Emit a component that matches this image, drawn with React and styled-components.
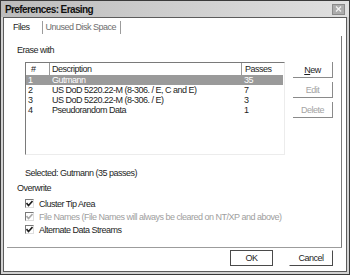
import styled, { createGlobalStyle } from "styled-components";

const GlobalStyle = createGlobalStyle`
  html, body {
    margin: 0;
    padding: 0;
    background: #ffffff;
  }
`;

const Window = styled.div`
  width: 350px;
  height: 275px;
  box-sizing: border-box;
  display: flex;
  flex-direction: column;
  background: #d2d2d2;
  border: 1px solid #3a3a3a;
  padding: 0 2px 2px 2px;
  font-family: "Liberation Sans", Arial, sans-serif;
  font-size: 9px;
  letter-spacing: -0.5px;
  color: #1e1e1e;
`;

const TitleBar = styled.div`
  height: 16px;
  margin: 0 -2px;
  padding: 0 4px 0 4px;
  display: flex;
  align-items: center;
  justify-content: space-between;
  background: linear-gradient(to right, #bcbcbc, #e0e0e0);
`;

const Title = styled.span`
  font-size: 10px;
  font-weight: bold;
  letter-spacing: -0.6px;
  color: #111;
`;

const CloseButton = styled.div`
  width: 13px;
  height: 11px;
  box-sizing: border-box;
  border: 1px solid #8a8a8a;
  background: #acacac;
  display: flex;
  align-items: center;
  justify-content: center;
`;

const Body = styled.div`
  flex: 1;
  display: flex;
  flex-direction: column;
  background: #ffffff;
  border: 1px solid #5c5c5c;
`;

const TabRow = styled.div`
  height: 18px;
  display: flex;
  align-items: center;
  padding-left: 9px;
`;

const Tab = styled.div`
  padding: ${(p) => (p.$active ? "0 12px 0 0" : "0 4px 0 3px")};
  color: ${(p) => (p.$active ? "#1e1e1e" : "#6e6e6e")};
  line-height: 12px;
`;

const TabSep = styled.div`
  width: 1px;
  height: 13px;
  background: #9c9c9c;
`;

const Panel = styled.div`
  height: 212px;
  box-sizing: border-box;
  margin: 0 4px 0 3px;
  padding: 9px 0 0 10px;
  border-right: 1px solid #7a7a7a;
  border-bottom: 1px solid #9c9c9c;
  display: flex;
  flex-direction: column;
`;

const SectionLabel = styled.div`
  line-height: 10px;
  margin-top: ${(p) => p.$top || 0}px;
  margin-bottom: ${(p) => p.$bottom || 0}px;
`;

const ListRow = styled.div`
  display: flex;
  align-items: flex-start;
  gap: 8px;
  margin: 7px 0 0 8px;
`;

const ListBox = styled.div`
  width: 260px;
  height: 93px;
  box-sizing: border-box;
  border-left: 1px solid #7a7a7a;
  border-top: 1px solid #7a7a7a;
  border-right: 1px solid #ececec;
  border-bottom: 1px solid #ececec;
`;

const HeaderRow = styled.div`
  display: flex;
  height: 12px;
  line-height: 12px;
`;

const ItemRow = styled.div`
  display: flex;
  height: 10px;
  line-height: 10px;
  margin-right: 1px;
  background: ${(p) => (p.$selected ? "#9a9a9a" : "transparent")};
  color: ${(p) => (p.$selected ? "#ffffff" : "#1e1e1e")};
`;

const NumCell = styled.div`
  width: 23px;
  padding-left: ${(p) => (p.$head ? 5 : 2)}px;
  box-sizing: border-box;
`;

const DescCell = styled.div`
  flex: 1;
  padding-left: 2px;
  white-space: nowrap;
  border-left: 1px solid ${(p) => (p.$head ? "#9a9a9a" : "transparent")};
`;

const PassCell = styled.div`
  width: 43px;
  padding-left: 3px;
  box-sizing: border-box;
  border-left: 1px solid ${(p) => (p.$head ? "#9a9a9a" : "transparent")};
`;

const ButtonColumn = styled.div`
  display: flex;
  flex-direction: column;
  gap: 4px;
`;

const SideButton = styled.div`
  width: 40px;
  height: 16px;
  box-sizing: border-box;
  display: flex;
  align-items: center;
  justify-content: center;
  border-right: 1px solid #8a8a8a;
  border-bottom: 1px solid #8a8a8a;
  color: ${(p) => (p.$disabled ? "#a4a4a4" : "#1e1e1e")};
`;

const Selected = styled.div`
  line-height: 10px;
  margin: 13px 0 0 8px;
`;

const CheckRow = styled.div`
  display: flex;
  align-items: center;
  height: 13px;
  margin-left: 8px;
  color: ${(p) => (p.$disabled ? "#9e9e9e" : "#1e1e1e")};
`;

const CheckBox = styled.div`
  width: 9px;
  height: 9px;
  box-sizing: border-box;
  margin-right: 5px;
  border-left: 1px solid #7a7a7a;
  border-top: 1px solid #7a7a7a;
  border-right: 1px solid #dedede;
  border-bottom: 1px solid #dedede;
  display: flex;
  align-items: center;
  justify-content: center;
`;

const Footer = styled.div`
  flex: 1;
  display: flex;
  justify-content: flex-end;
  align-items: flex-start;
  gap: 16px;
  padding: 2px 13px 0 0;
`;

const DialogButton = styled.div`
  width: ${(p) => p.$w}px;
  height: 16px;
  box-sizing: border-box;
  display: flex;
  align-items: center;
  justify-content: center;
  border: 1px solid ${(p) => (p.$default ? "#4a4a4a" : "transparent")};
  border-right-color: #4a4a4a;
  border-bottom-color: #4a4a4a;
`;

const Check = ({ color }) => (
  <svg width="7" height="7" viewBox="0 0 7 7">
    <path d="M0.5 3 L2.5 5.5 L6.5 1" fill="none" stroke={color} strokeWidth="1.6" />
  </svg>
);

const rows = [
  { n: "1", d: "Gutmann", p: "35" },
  { n: "2", d: "US DoD 5220.22-M (8-306. / E, C and E)", p: "7" },
  { n: "3", d: "US DoD 5220.22-M (8-306. / E)", p: "3" },
  { n: "4", d: "Pseudorandom Data", p: "1" },
];

const options = [
  { label: "Cluster Tip Area" },
  { label: "File Names (File Names will always be cleared on NT/XP and above)", disabled: true },
  { label: "Alternate Data Streams" },
];

export default function App() {
  return (
    <>
      <GlobalStyle />
      <Window>
        <TitleBar>
          <Title>Preferences: Erasing</Title>
          <CloseButton>
            <svg width="7" height="6" viewBox="0 0 7 6">
              <path d="M1 0.5 L6 5.5 M6 0.5 L1 5.5" stroke="#f2f2f2" strokeWidth="1.3" />
            </svg>
          </CloseButton>
        </TitleBar>
        <Body>
          <TabRow>
            <Tab $active>Files</Tab>
            <TabSep />
            <Tab>Unused Disk Space</Tab>
            <TabSep />
          </TabRow>
          <Panel>
            <SectionLabel>Erase with</SectionLabel>
            <ListRow>
              <ListBox>
                <HeaderRow>
                  <NumCell $head>#</NumCell>
                  <DescCell $head>Description</DescCell>
                  <PassCell $head>Passes</PassCell>
                </HeaderRow>
                {rows.map((r, i) => (
                  <ItemRow key={"row" + i} $selected={i === 0}>
                    <NumCell>{r.n}</NumCell>
                    <DescCell>{r.d}</DescCell>
                    <PassCell>{r.p}</PassCell>
                  </ItemRow>
                ))}
              </ListBox>
              <ButtonColumn>
                <SideButton>
                  <span>
                    <u>N</u>ew
                  </span>
                </SideButton>
                <SideButton $disabled>Edit</SideButton>
                <SideButton $disabled>Delete</SideButton>
              </ButtonColumn>
            </ListRow>
            <Selected>Selected: Gutmann (35 passes)</Selected>
            <SectionLabel $top={5} $bottom={4}>
              Overwrite
            </SectionLabel>
            {options.map((o, i) => (
              <CheckRow key={"opt" + i} $disabled={o.disabled}>
                <CheckBox>
                  <Check color={o.disabled ? "#a8a8a8" : "#1e1e1e"} />
                </CheckBox>
                {o.label}
              </CheckRow>
            ))}
          </Panel>
          <Footer>
            <DialogButton $w={43} $default>
              OK
            </DialogButton>
            <DialogButton $w={44}>Cancel</DialogButton>
          </Footer>
        </Body>
      </Window>
    </>
  );
}
